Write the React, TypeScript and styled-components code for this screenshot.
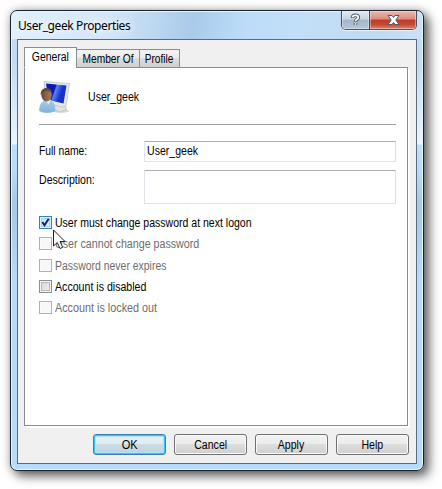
import React from "react";
import styled, { createGlobalStyle } from "styled-components";

const Global = createGlobalStyle`
  * { box-sizing: border-box; }
  body { margin: 0; background: #fff; overflow: hidden; font: 12px/16px "Liberation Sans", Arial, sans-serif; color: #000; }
`;

const Desktop = styled.main`
  width: 442px;
  height: 489px;
  padding: 10px;
  overflow: hidden;
  background: #fff;
`;

const Window = styled.section`
  display: flex;
  flex-direction: column;
  width: 414px;
  height: 461px;
  padding: 0 6px 6px;
  border: 1px solid #17212b;
  border-radius: 7px;
  background:
    linear-gradient(100deg, #e3f0fb 0%, #d3e6f8 24%, #a9cbea 44%, #bcdcfa 57%, #c3dff8 70%, #c0daf3 88%, #cbe1f5 100%) 0 0 / 100% 28px no-repeat,
    linear-gradient(#c5dff6 0, #c0dbf4 50px, #e9f4fd 130px, #ecf6fe 133px, #bddeff 134px, #b9dafa 160px, #a8cae9 190px, #a8cbeb 210px, #b9dafa 270px, #b8dafb 100%);
  box-shadow: inset 0 0 0 1px #e6f5ff, 5px 5px 11px 0 rgba(0, 0, 0, .6), 0 0 10px rgba(0, 0, 0, .25);
`;

const TitleBar = styled.header`
  display: flex;
  justify-content: space-between;
  flex: none;
  height: 28px;
`;

const Title = styled.h1`
  margin: 6px 0 0 1px;
  font: 400 12px/17px "Noto Sans", sans-serif;
  letter-spacing: -0.4px;
  white-space: nowrap;
  text-shadow: 0 0 6px #fff, 0 0 8px #fff;
`;

const Text = styled.span<{ $scale?: number; $centered?: boolean }>`
  display: inline-block;
  white-space: nowrap;
  transform: scaleX(${(p) => p.$scale ?? 0.88});
  transform-origin: ${(p) => (p.$centered ? "center" : "left")};
`;

const Caption = styled.div`
  display: flex;
  height: 19px;
  border: 1px solid #46535f;
  border-top: 0;
  border-radius: 0 0 5px 5px;
  overflow: hidden;
  box-shadow: 0 1px 0 #e4f2fd;
`;

const CaptionButton = styled.button<{ $close?: boolean }>`
  display: grid;
  place-items: center;
  width: ${(p) => (p.$close ? 47 : 27)}px;
  padding: 0;
  border: 0;
  border-left: ${(p) => (p.$close ? "1px solid #7b2f2c" : "0")};
  background: ${(p) =>
    p.$close
      ? "linear-gradient(#efb5a9 0, #dc8d7f 45%, #bd3b26 50%, #c64a32 75%, #d98470 100%)"
      : "linear-gradient(#dfe9f2 0, #c7d5e2 45%, #a3b5c7 50%, #b4c8db 100%)"};
  box-shadow: inset 0 0 0 1px rgba(255, 255, 255, .4);
`;

const Client = styled.div`
  flex: 1;
  display: flex;
  flex-direction: column;
  padding: 7px 6px 8px;
  border: 1px solid #5a6b7b;
  background: #f0f0f0;
`;

const Tabs = styled.nav`
  display: flex;
  align-items: flex-end;
  height: 21px;
  margin-bottom: -1px;
  position: relative;
`;

const Tab = styled.button<{ $active?: boolean; $width: number }>`
  display: flex;
  justify-content: center;
  align-items: center;
  width: ${(p) => p.$width}px;
  height: ${(p) => (p.$active ? 21 : 19)}px;
  margin-left: ${(p) => (p.$active ? 0 : -1)}px;
  padding: ${(p) => (p.$active ? "0 0 1px" : "1px 0 0")};
  border: 1px solid #898c95;
  border-bottom-color: ${(p) => (p.$active ? "#fff" : "#898c95")};
  background: ${(p) => (p.$active ? "#fff" : "linear-gradient(#f2f2f2 0, #ebebeb 48%, #dddddd 50%, #cfcfcf 100%)")};
  font: inherit;
  color: inherit;
`;

const Panel = styled.div`
  width: 384px;
  height: 359px;
  padding: 10px 11px 0 14px;
  border: 1px solid #898c95;
  background: #fff;
  box-shadow: 2px 2px 0 #fff;
`;

const Identity = styled.div`
  display: flex;
  align-items: center;
  gap: 17px;
  height: 47px;
  border-bottom: 1px solid #a0a0a0;
  padding-bottom: 9px;
`;

const Field = styled.label<{ $height: number; $top: number }>`
  display: flex;
  height: ${(p) => p.$height}px;
  margin-top: ${(p) => p.$top}px;
`;

const FieldName = styled.span`
  width: 105px;
  padding-top: 2px;
`;

const Input = styled.div`
  width: 252px;
  padding: 1px 2px;
  border: 1px solid #e2e3ea;
  border-top-color: #abadb3;
  border-right-color: #dbdfe6;
  border-radius: 1px;
`;

const Options = styled.div`
  display: grid;
  grid-template-rows: 21px 22px 21px 21px 21px;
  margin-top: 12px;
`;

const Option = styled.label<{ $disabled?: boolean }>`
  display: flex;
  align-items: flex-start;
  gap: 3px;
  height: 13px;
  line-height: 14px;
  color: ${(p) => (p.$disabled ? "#6d6d6d" : "#000")};
  position: relative;
`;

const Box = styled.span<{ $kind: "hot" | "normal" | "off" }>`
  display: block;
  width: 13px;
  height: 13px;
  border: 1px solid ${(p) => ({ hot: "#3c7fb1", normal: "#8e8f8f", off: "#b1b1b1" })[p.$kind]};
  background: ${(p) =>
    ({ hot: "linear-gradient(135deg, #b5dbf3, #f0faff)", normal: "linear-gradient(135deg, #cbcfd5, #f6f6f6)", off: "#f7f7f7" })[p.$kind]};
  box-shadow: inset 0 0 0 1px ${(p) => ({ hot: "#dcf3ff", normal: "#f4f4f4", off: "#fbfbfb" })[p.$kind]},
    inset 0 0 0 2px ${(p) => ({ hot: "#9bd5f2", normal: "#b5b9bf", off: "#f7f7f7" })[p.$kind]};
`;

const Pointer = styled.svg`
  position: absolute;
  left: 14px;
  top: 13px;
  z-index: 1;
`;

const Check = styled.svg`
  display: block;
`;

const Actions = styled.footer`
  display: flex;
  justify-content: flex-end;
  gap: 8px;
  margin: 8px 1px 0 0;
`;

const Button = styled.button<{ $primary?: boolean }>`
  width: 73px;
  height: 21px;
  flex: none;
  padding: 1px 0 0;
  border: 1px solid ${(p) => (p.$primary ? "#3c7fb1" : "#707070")};
  border-radius: 3px;
  background: ${(p) =>
    p.$primary
      ? "linear-gradient(#ecf2f6 0, #e0eaf0 48%, #cadce6 50%, #c0d3df 100%)"
      : "linear-gradient(#f2f2f2 0, #ebebeb 48%, #dddddd 50%, #cfcfcf 100%)"};
  box-shadow: ${(p) => (p.$primary ? "inset 0 0 0 1px #35c7f5, inset 0 0 1px 2px #a5e3f8" : "inset 0 0 0 1px #fafafa")};
  font: inherit;
  line-height: 16px;
  color: #000;
`;

function UserIcon() {
  return (
    <svg width="32" height="34" viewBox="0 0 32 34">
      <defs>
        <linearGradient id="screen" x2="1" y2=".35">
          <stop offset="0" stopColor="#0a20a5" />
          <stop offset=".45" stopColor="#0715bd" />
          <stop offset=".52" stopColor="#5a83ee" />
          <stop offset=".8" stopColor="#1533cf" />
          <stop offset="1" stopColor="#1230c4" />
        </linearGradient>
        <linearGradient id="shirt" x2="0" y2="1">
          <stop offset="0" stopColor="#a7cfea" />
          <stop offset="1" stopColor="#7fb2d8" />
        </linearGradient>
        <linearGradient id="skin">
          <stop offset="0" stopColor="#6a4b38" />
          <stop offset="1" stopColor="#ad7b5b" />
        </linearGradient>
      </defs>
      <ellipse cx="22" cy="31" rx="8" ry="1.800" fill="#bbb" opacity=".6" />
      <path d="M15 26l9-2 4 5-7 3-6-3z" fill="#e2e2e2" stroke="#b5b5b5" strokeWidth=".6" />
      <path d="M5 1.500l25.500 2-3.500 23-4 .5-16-4z" fill="#e6e7e9" stroke="#b9bbbf" strokeWidth=".7" />
      <path d="M7 3.500l20.500 2-3 18-15-3.500z" fill="url(#screen)" />
      <path d="M.5 31c0-7 3-11 8-11s7.500 4 7.500 11q-7.500 3.500-15.500 0z" fill="url(#shirt)" stroke="#7faed2" strokeWidth=".5" />
      <path d="M6 19.500l3.500 5 2.500-5z" fill="#e4eff7" />
      <ellipse cx="7.500" cy="15" rx="5.200" ry="6.500" fill="url(#skin)" />
      <path d="M1.800 15C.5 6 12.500 6 12.800 12.500q-6-3.500-9 .5z" fill="#5d4e42" />
    </svg>
  );
}

const options: { label: string; kind: "hot" | "normal" | "off"; scale: number }[] = [
  { label: "User must change password at next logon", kind: "hot", scale: 0.877 },
  { label: "User cannot change password", kind: "off", scale: 0.89 },
  { label: "Password never expires", kind: "off", scale: 0.87 },
  { label: "Account is disabled", kind: "normal", scale: 0.884 },
  { label: "Account is locked out", kind: "off", scale: 0.9 },
];

export default function App() {
  return (
    <Desktop>
      <Global />
      <Window>
        <TitleBar>
          <Title>User_geek Properties</Title>
          <Caption>
            <CaptionButton aria-label="Help">
              <svg width="11" height="14" viewBox="0 0 11 14" fill="none">
                <path d="M2.500 5C2.500 1.500 8.300 1.500 8.300 4.500C8.300 6.500 5.500 6 5.500 8.700M5.500 10V12" stroke="#4b5665" strokeWidth="3.600" />
                <path d="M2.500 4.300C2.800 1.800 8.300 1.800 8.300 4.500C8.300 6.500 5.500 6 5.500 8.200M5.500 10.200V11.800" stroke="#fff" strokeWidth="1.800" />
              </svg>
            </CaptionButton>
            <CaptionButton $close aria-label="Close">
              <svg width="13" height="12" viewBox="0 0 13 12">
                <path d="M1 1.500H5L6.500 3.500 8 1.500H12L8.800 6 12 10.500H8L6.500 8.500 5 10.500H1L4.200 6Z" fill="#fff" stroke="#535666" />
              </svg>
            </CaptionButton>
          </Caption>
        </TitleBar>
        <Client>
          <Tabs>
            <Tab $active $width={53}><Text $centered $scale={0.87}>General</Text></Tab>
            <Tab $width={64}><Text $centered $scale={0.85}>Member Of</Text></Tab>
            <Tab $width={41}><Text $centered $scale={0.84}>Profile</Text></Tab>
          </Tabs>
          <Panel>
            <Identity><UserIcon /><Text>User_geek</Text></Identity>
            <Field $height={21} $top={16}>
              <FieldName><Text $scale={0.86}>Full name:</Text></FieldName>
              <Input><Text>User_geek</Text></Input>
            </Field>
            <Field $height={34} $top={8}>
              <FieldName><Text>Description:</Text></FieldName>
              <Input />
            </Field>
            <Options>
              {options.map((o) => (
                <Option key={o.label} $disabled={o.kind === "off"}>
                  <Box $kind={o.kind}>
                    {o.kind === "hot" && (
                      <Check width="11" height="11" viewBox="0 0 11 11">
                        <path d="M2.300 5l2.200 3.200L8.700 1.800" fill="none" stroke="#12246f" strokeWidth="2" />
                      </Check>
                    )}
                  </Box>
                  <Text $scale={o.scale}>{o.label}</Text>
                  {o.kind === "hot" && (
                    <Pointer width="14" height="21" viewBox="0 0 14 21">
                      <path d="M.5 1V17L4.300 13.500 7 19.500 9.700 18.300 7 12.500H12Z" fill="#fff" stroke="#222" />
                    </Pointer>
                  )}
                </Option>
              ))}
            </Options>
          </Panel>
          <Actions>
            <Button $primary><Text $centered $scale={0.92}>OK</Text></Button>
            <Button><Text $centered>Cancel</Text></Button>
            <Button><Text $centered>Apply</Text></Button>
            <Button><Text $centered>Help</Text></Button>
          </Actions>
        </Client>
      </Window>
    </Desktop>
  );
}
